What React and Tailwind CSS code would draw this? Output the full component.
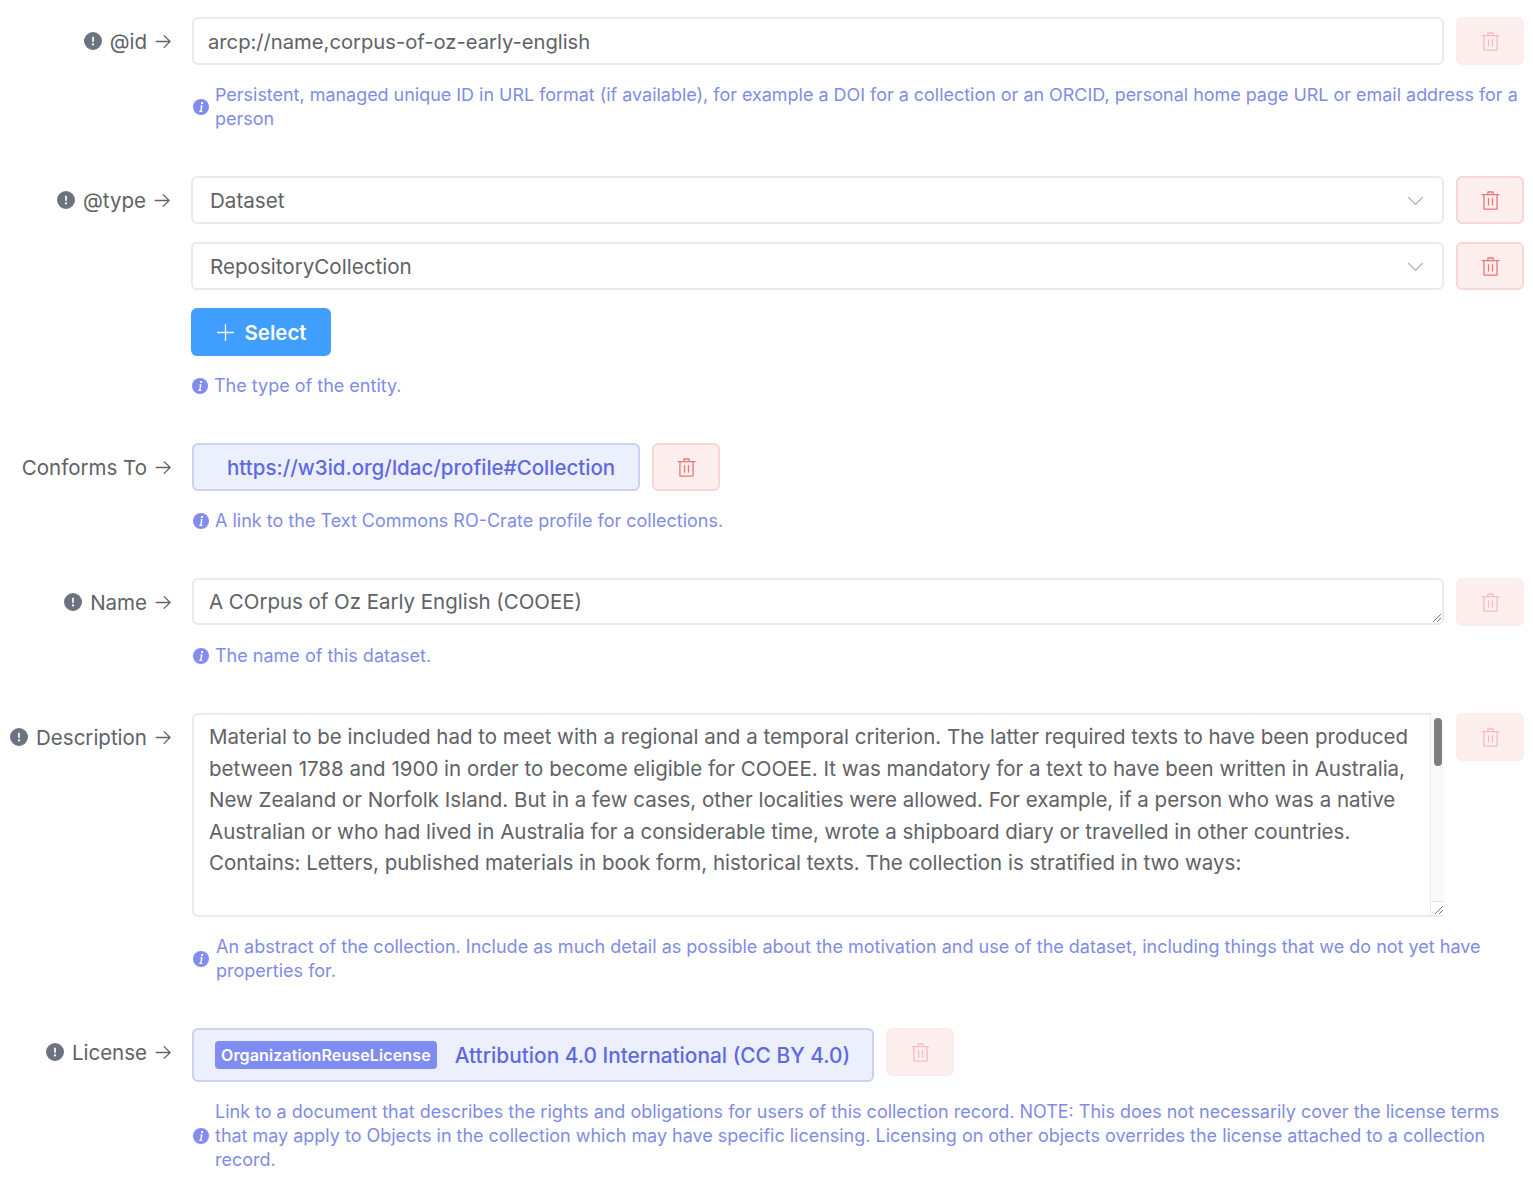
import React from "react";
import { FaCircleExclamation } from "react-icons/fa6";

const P = {
  trash: "M160 256H96a32 32 0 0 1 0-64h256V95.936a32 32 0 0 1 32-32h256a32 32 0 0 1 32 32V192h256a32 32 0 1 1 0 64h-64v672a32 32 0 0 1-32 32H192a32 32 0 0 1-32-32V256zm448-64v-64H416v64h192zM224 896h576V256H224v640zm192-128a32 32 0 0 1-32-32V416a32 32 0 0 1 64 0v320a32 32 0 0 1-32 32zm192 0a32 32 0 0 1-32-32V416a32 32 0 0 1 64 0v320a32 32 0 0 1-32 32z",
  arrow: "M754.752 480H160a32 32 0 1 0 0 64h594.752L521.344 777.344a32 32 0 0 0 45.312 45.312l288-288a32 32 0 0 0 0-45.312l-288-288a32 32 0 1 0-45.312 45.312L754.752 480z",
  down: "M831.872 340.864 512 652.672 192.128 340.864a30.592 30.592 0 0 0-42.752 0 29.12 29.12 0 0 0 0 41.6L489.664 714.24a32 32 0 0 0 44.672 0l340.288-331.712a29.12 29.12 0 0 0 0-41.728 30.592 30.592 0 0 0-42.752 0z",
  plus: "M480 480V128a32 32 0 0 1 64 0v352h352a32 32 0 1 1 0 64H544v352a32 32 0 1 1-64 0V544H128a32 32 0 0 1 0-64h352z",
};

function Ep({ d, className }) {
  return (
    <svg viewBox="0 0 1024 1024" className={className} fill="currentColor">
      <path d={d} />
    </svg>
  );
}

function Label({ text, required = true, width = "w-[172px]" }) {
  return (
    <div className={`${width} h-12 shrink-0 flex items-center justify-end text-[20.5px] text-[#606266]`}>
      {required && <FaCircleExclamation className="w-[18px] h-[18px] mr-2 text-[#6b7280] shrink-0" />}
      <span className="pt-0.5">{text}</span>
      <Ep d={P.arrow} className="w-[21px] h-[21px] ml-[6px] -mr-[2px] text-[#606266] shrink-0" />
    </div>
  );
}

function Del({ disabled }) {
  return (
    <div
      className={
        disabled
          ? "w-[68px] h-12 shrink-0 rounded-md border-2 border-[#fdecec] bg-[#feefef] flex items-center justify-center text-[#f9bcbc]"
          : "w-[68px] h-12 shrink-0 rounded-md border-2 border-[#fad5d5] bg-[#feefef] flex items-center justify-center text-[#e87878]"
      }
    >
      <Ep d={P.trash} className="w-[21px] h-[21px]" />
    </div>
  );
}

function Hint({ children, size = "text-[18px]", gap = "mr-[6px]" }) {
  return (
    <div className={`mt-[18px] flex items-center ${size} leading-6 text-[#7f8ce6]`}>
      <svg viewBox="0 0 16 16" className={`w-4 h-4 shrink-0 ml-px ${gap}`}>
        <circle cx="8" cy="8" r="8" fill="#818cf0" />
        <path d="M8.3 3.1h2l-.35 1.8h-2zM7.6 6.2h2L8.55 11.7h.9l-.2 1.2H6.2l.2-1.2h.75l.75-4.3h-.5z" fill="#fff" />
      </svg>
      <div className="min-w-0">{children}</div>
    </div>
  );
}

function Grip({ className }) {
  return (
    <svg viewBox="0 0 10 10" className={className} fill="none" stroke="#555" strokeWidth="0.8">
      <path d="M9 1 1 9M9 5 5 9" />
    </svg>
  );
}

function SelectRow({ text }) {
  return (
    <div className="flex gap-3 mb-[18px]">
      <div className="flex-1 min-w-0 h-12 rounded-md border-2 border-[#e9eaf0] bg-white flex items-center justify-between pl-[17px] pr-[16px] text-[20.6px] text-[#606266]">
        <span className="pt-0.5">{text}</span>
        <Ep d={P.down} className="w-[21px] h-[21px] text-[#a8abb2]" />
      </div>
      <Del />
    </div>
  );
}

export default function App() {
  return (
    <div className="w-[1533px] h-[1190px] overflow-hidden bg-white pt-[17px] pr-[9px] font-['Inter',sans-serif]">
      {/* @id */}
      <div className="flex gap-5 mb-[45px]">
        <Label text="@id" />
        <div className="flex-1 min-w-0">
          <div className="flex gap-3">
            <div className="flex-1 min-w-0 h-12 rounded-md border-2 border-[#e9eaf0] bg-white flex items-center pl-[14px] text-[20.2px] text-[#606266]">
              <span className="pt-0.5">arcp://name,corpus-of-oz-early-english</span>
            </div>
            <Del disabled />
          </div>
          <Hint size="text-[17.94px]">
            Persistent, managed unique ID in URL format (if available), for example a DOI for a collection or an ORCID, personal home page URL or email address for a person
          </Hint>
        </div>
      </div>

      {/* @type */}
      <div className="flex gap-5 mb-[45px]">
        <Label text="@type" width="w-[171px]" />
        <div className="flex-1 min-w-0">
          <SelectRow text="Dataset" />
          <SelectRow text="RepositoryCollection" />
          <div className="w-[140px] h-12 rounded-md bg-[#409eff] text-white text-[20.5px] font-semibold flex items-center justify-center">
            <Ep d={P.plus} className="w-[21px] h-[21px] mr-[8px]" />
            <span className="pt-0.5">Select</span>
          </div>
          <Hint>The type of the entity.</Hint>
        </div>
      </div>

      {/* Conforms To */}
      <div className="flex gap-5 mb-[45px]">
        <Label text="Conforms To" required={false} />
        <div className="flex-1 min-w-0">
          <div className="flex gap-3">
            <div className="h-12 rounded-md border-2 border-[#ccd1f2] bg-[#eceffc] flex items-center pl-[33px] pr-[23px] text-[20.5px] font-medium text-[#5f69e0]">
              <span className="pt-0.5">https://w3id.org/ldac/profile#Collection</span>
            </div>
            <Del />
          </div>
          <Hint>A link to the Text Commons RO-Crate profile for collections.</Hint>
        </div>
      </div>

      {/* Name */}
      <div className="flex gap-5 mb-[45px]">
        <Label text="Name" />
        <div className="flex-1 min-w-0">
          <div className="flex gap-3 items-start">
            <div className="relative flex-1 min-w-0 h-[47px] rounded-md border-2 border-[#e9eaf0] bg-white flex items-center pl-[15px] text-[20.45px] text-[#606266]">
              <span className="pt-0.5">A COrpus of Oz Early English (COOEE)</span>
              <Grip className="absolute right-0 bottom-0 w-2.5 h-2.5" />
            </div>
            <Del disabled />
          </div>
          <Hint>The name of this dataset.</Hint>
        </div>
      </div>

      {/* Description */}
      <div className="flex gap-5 mb-[45px]">
        <Label text="Description" />
        <div className="flex-1 min-w-0">
          <div className="flex gap-3">
            <div className="flex-1 min-w-0 h-[204px] flex">
              <div className="flex-1 min-w-0 border-2 border-r-0 border-[#e9eaf0] rounded-l-md pl-[15px] pr-5 pt-[6.4px] text-[20.5px] leading-[31.5px] text-[#606266]">
                Material to be included had to meet with a regional and a temporal criterion. The latter required texts to have been produced between 1788 and 1900 in order to become eligible for COOEE. It was mandatory for a text to have been written in Australia, New Zealand or Norfolk Island. But in a few cases, other localities were allowed. For example, if a person who was a native Australian or who had lived in Australia for a considerable time, wrote a shipboard diary or travelled in other countries. Contains: Letters, published materials in book form, historical texts. The collection is stratified in two ways:
              </div>
              <div className="w-3.5 shrink-0 bg-[#fafafa] border-l border-b-2 border-[#e9eaf0] flex flex-col">
                <div className="flex-1 pt-[5px] pl-[3px]">
                  <div className="w-2 h-12 rounded bg-[#7f7f7f]" />
                </div>
                <div className="relative h-3.5 bg-white border-t border-[#e5e5e5]">
                  <Grip className="absolute right-0 bottom-0 w-2.5 h-2.5" />
                </div>
              </div>
            </div>
            <Del disabled />
          </div>
          <Hint gap="mr-[7px]">
            An abstract of the collection. Include as much detail as possible about the motivation and use of the dataset, including things that we do not yet have properties for.
          </Hint>
        </div>
      </div>

      {/* License */}
      <div className="flex gap-5">
        <Label text="License" />
        <div className="flex-1 min-w-0">
          <div className="flex gap-3 items-start">
            <div className="h-[54px] rounded-md border-2 border-[#ccd1f2] bg-[#eceffc] flex items-center pl-[21px] pr-[22px]">
              <span className="h-7 rounded bg-[#7f8cf2] text-white text-[16px] tracking-[0.12px] font-semibold flex items-center px-[6px] pb-px mr-[18px]">
                OrganizationReuseLicense
              </span>
              <span className="pt-0.5 text-[20.85px] font-medium text-[#5f69e0]">Attribution 4.0 International (CC BY 4.0)</span>
            </div>
            <Del disabled />
          </div>
          <Hint size="text-[17.98px]">
            Link to a document that describes the rights and obligations for users of this collection record. NOTE: This does not necessarily cover the license terms that may apply to Objects in the collection which may have specific licensing. Licensing on other objects overrides the license attached to a collection record.
          </Hint>
        </div>
      </div>
    </div>
  );
}
